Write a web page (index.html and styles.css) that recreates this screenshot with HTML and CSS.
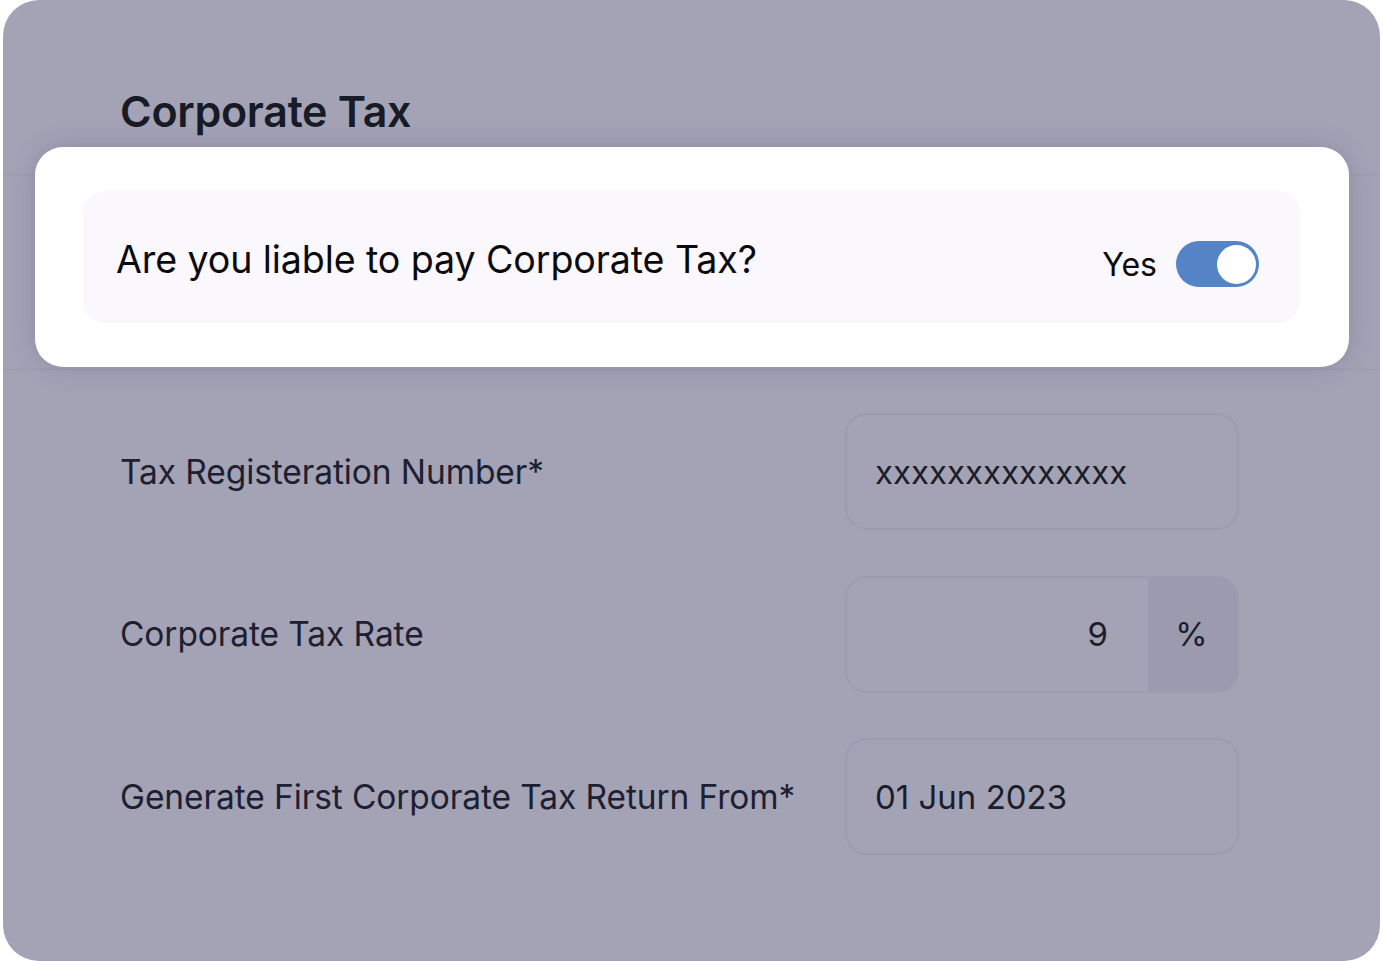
FILE: index.html
```html
<!DOCTYPE html>
<html>
<head>
<meta charset="utf-8">
<link rel="stylesheet" href="styles.css">
</head>
<body>
<div class="panel">
  <div class="header">
    <h1 class="title">Corporate Tax</h1>
  </div>
  <div class="section">
    <div class="card">
      <div class="question">
        <span class="question-text">Are you liable to pay Corporate Tax?</span>
        <div class="answer">
          <span class="answer-text">Yes</span>
          <span class="toggle"><span class="knob"></span></span>
        </div>
      </div>
    </div>
  </div>
  <div class="rows">
    <div class="row">
      <span class="label">Tax Registeration Number*</span>
      <div class="field"><span class="value">xxxxxxxxxxxxxx</span></div>
    </div>
    <div class="row">
      <span class="label">Corporate Tax Rate</span>
      <div class="field field-split">
        <span class="value value-right">9</span>
        <span class="addon">%</span>
      </div>
    </div>
    <div class="row">
      <span class="label">Generate First Corporate Tax Return From*</span>
      <div class="field"><span class="value">01 Jun 2023</span></div>
    </div>
  </div>
</div>
</body>
</html>
```

FILE: styles.css
```css
* { box-sizing: border-box; }
html, body {
  margin: 0;
  padding: 0;
  background: #ffffff;
}
body {
  font-family: Inter, "Noto Sans", sans-serif;
  color: #1b1e2a;
}
.panel {
  margin-left: 3px;
  width: 1377px;
  height: 961px;
  background: #a4a3b6;
  border-radius: 36px;
  overflow: hidden;
}
.header {
  height: 175px;
  border-bottom: 1px solid #9a99ad;
  padding: 84px 0 0 117px;
}
.title {
  margin: 0;
  font-size: 43px;
  font-weight: 600;
  line-height: 54px;
  letter-spacing: -0.3px;
  color: #171b26;
}
.section {
  display: flow-root;
  height: 195px;
  border-bottom: 1px solid #9a99ad;
}
.card {
  margin: -28px 31px 0 32px;
  height: 220px;
  background: #ffffff;
  border-radius: 28px;
  padding: 44px 49px 44px 48px;
  box-shadow: 0 0 26px rgba(70, 64, 100, 0.24);
}
.question {
  height: 132px;
  background: #faf8fc;
  border-radius: 22px;
  display: flex;
  align-items: center;
  justify-content: space-between;
  padding: 0 41px 0 33px;
}
.question-text {
  font-size: 37.6px;
  color: #0a0a0d;
  letter-spacing: -0.1px;
  margin-top: 4px;
}
.answer {
  display: flex;
  align-items: center;
  gap: 19px;
  margin-top: 14px;
}
.answer-text {
  font-size: 32px;
  color: #0a0a0d;
}
.toggle {
  width: 83px;
  height: 46px;
  border-radius: 23px;
  background: #5584c6;
  display: flex;
  align-items: center;
  justify-content: flex-end;
  padding-right: 3px;
}
.knob {
  width: 39px;
  height: 39px;
  border-radius: 50%;
  background: #ffffff;
}
.rows {
  padding: 43px 141px 0 117px;
  display: flex;
  flex-direction: column;
  gap: 45.5px;
}
.row {
  display: flex;
  align-items: center;
  justify-content: space-between;
}
.label {
  font-size: 33.5px;
  color: #1d2030;
  letter-spacing: -0.1px;
}
.field {
  width: 394px;
  height: 117px;
  border: 2px solid #9c9bb0;
  border-radius: 22px;
  display: flex;
  align-items: center;
  padding-left: 28px;
  overflow: hidden;
}
.value {
  font-size: 33px;
  color: #1b1e2a;
}
.field-split {
  padding-left: 0;
}
.value-right {
  flex: 1;
  text-align: right;
  padding-right: 40px;
}
.addon {
  width: 89px;
  align-self: stretch;
  background: #9b9aaf;
  display: flex;
  align-items: center;
  justify-content: center;
  font-size: 33px;
  padding-right: 2px;
}
```
